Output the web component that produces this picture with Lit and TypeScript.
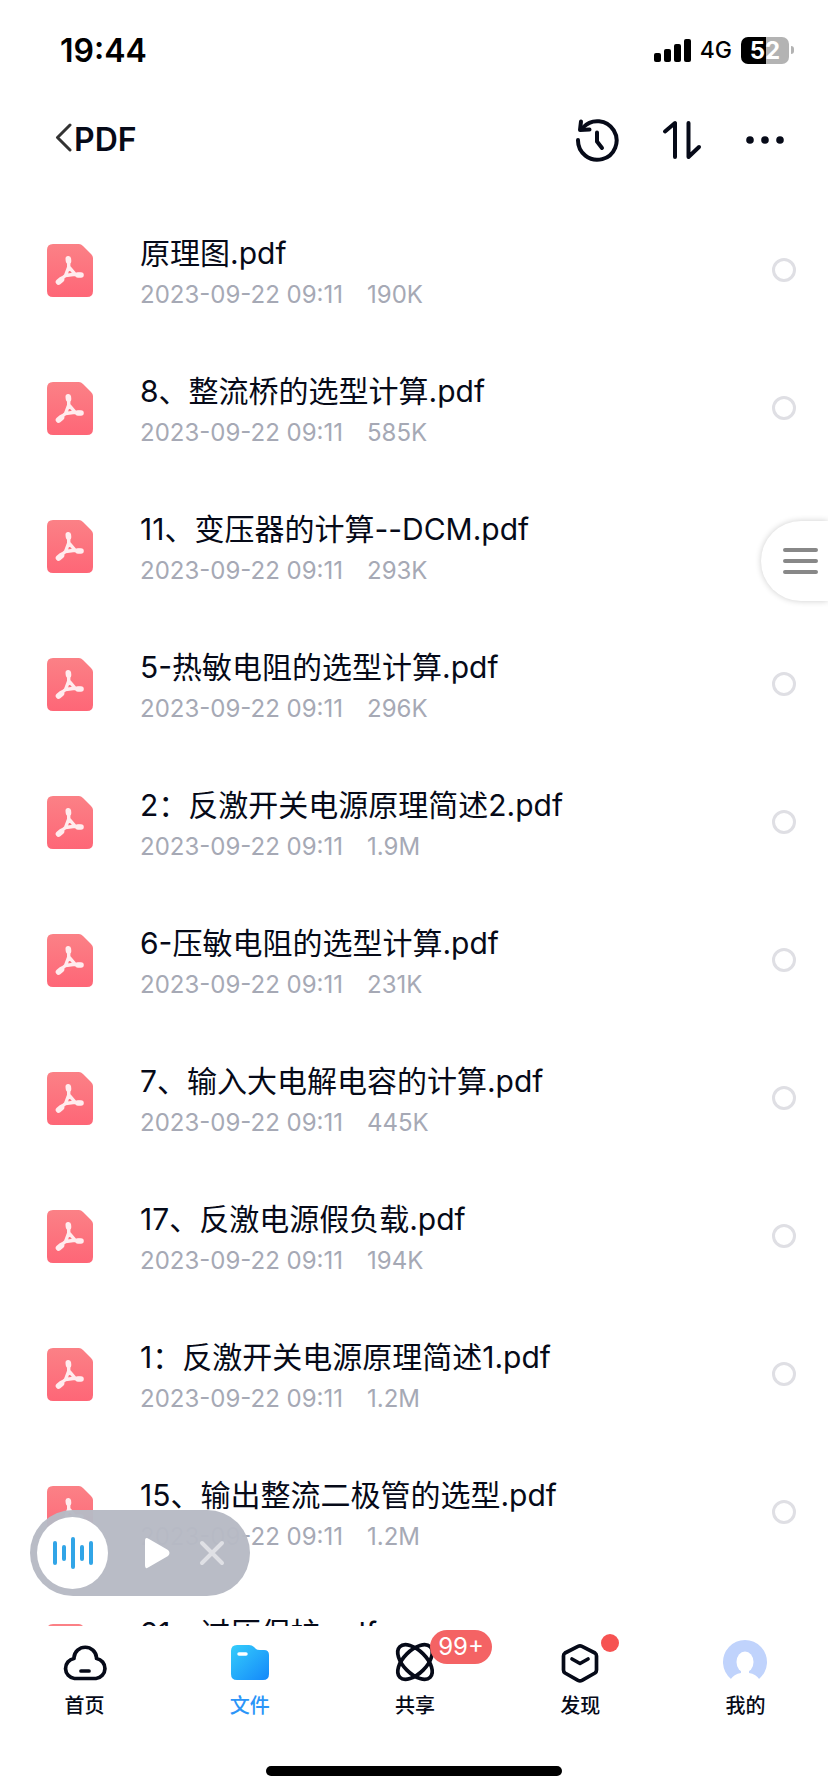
import { LitElement, html, css, svg } from "lit";
import { customElement, property } from "lit/decorators.js";

interface PdfFile {
  name: string;
  date: string;
  size: string;
}

const DATE = "2023-09-22 09:11";
const files: PdfFile[] = [
  { name: "原理图.pdf", date: DATE, size: "190K" },
  { name: "8、整流桥的选型计算.pdf", date: DATE, size: "585K" },
  { name: "11、变压器的计算--DCM.pdf", date: DATE, size: "293K" },
  { name: "5-热敏电阻的选型计算.pdf", date: DATE, size: "296K" },
  { name: "2：反激开关电源原理简述2.pdf", date: DATE, size: "1.9M" },
  { name: "6-压敏电阻的选型计算.pdf", date: DATE, size: "231K" },
  { name: "7、输入大电解电容的计算.pdf", date: DATE, size: "445K" },
  { name: "17、反激电源假负载.pdf", date: DATE, size: "194K" },
  { name: "1：反激开关电源原理简述1.pdf", date: DATE, size: "1.2M" },
  { name: "15、输出整流二极管的选型.pdf", date: DATE, size: "1.2M" },
  { name: "21、过压保护.pdf", date: DATE, size: "1.2M" },
];

@customElement("status-bar")
export class StatusBar extends LitElement {
  static styles = css`
    :host {
      display: flex;
      align-items: center;
      justify-content: space-between;
      height: 100px;
      padding: 0 34px 0 60px;
      box-sizing: border-box;
      color: #000;
    }
    .time {
      font-size: 32px;
      font-weight: 600;
    }
    .right {
      display: flex;
      align-items: center;
      gap: 9px;
    }
    .network {
      font-size: 23px;
      font-weight: 500;
    }
    .battery {
      display: flex;
      align-items: center;
      gap: 2px;
    }
    .level {
      width: 48px;
      height: 27px;
      border-radius: 7px;
      background: linear-gradient(90deg, #000 52%, #b3b3b3 52%);
      color: #fff;
      font-size: 24px;
      line-height: 27px;
      font-weight: 700;
      text-align: center;
    }
    .tip {
      width: 3px;
      height: 8px;
      border-radius: 0 4px 4px 0;
      background: #b3b3b3;
    }
  `;
  render() {
    return html`
      <span class="time">19:44</span>
      <span class="right">
        <svg width="37" height="24" viewBox="0 0 37 24" aria-hidden="true">
          <rect x="0" y="15" width="7" height="9" rx="2" />
          <rect x="10" y="11" width="7" height="13" rx="2" />
          <rect x="20" y="6" width="7" height="18" rx="2" />
          <rect x="30" y="1" width="7" height="23" rx="2" />
        </svg>
        <span class="network">4G</span>
        <span class="battery"><span class="level">52</span><span class="tip"></span></span>
      </span>
    `;
  }
}

@customElement("nav-header")
export class NavHeader extends LitElement {
  static styles = css`
    :host {
      display: flex;
      align-items: center;
      justify-content: space-between;
      height: 80px;
      padding: 0 40px 0 54px;
      color: #060a18;
    }
    button {
      display: flex;
      padding: 0;
      border: 0;
      background: none;
      color: inherit;
      font: inherit;
    }
    .title {
      display: flex;
      align-items: center;
      gap: 2px;
    }
    h1 {
      margin: 0;
      font-size: 32px;
      line-height: 40px;
      font-weight: 600;
    }
    .actions {
      display: flex;
      align-items: center;
      gap: 40px;
    }
    svg {
      display: block;
      fill: none;
      stroke: currentColor;
      stroke-width: 4;
      stroke-linecap: round;
      stroke-linejoin: round;
    }
    .back {
      stroke: #333;
      stroke-width: 3;
    }
    .dots {
      fill: currentColor;
      stroke: none;
    }
  `;
  render() {
    return html`
      <div class="title">
        <button aria-label="返回">
          <svg class="back" width="18" height="34" viewBox="0 0 18 34"><path d="M16 2 3.500 14.500 16 27" /></svg>
        </button>
        <h1>PDF</h1>
      </div>
      <div class="actions">
        <button aria-label="历史">
          <svg width="46" height="46" viewBox="0 0 46 46">
            <path d="M4 23A19.300 19.300 0 1 0 9 10.500" />
            <path d="M7 4.500 6 13 15.500 12.500" />
            <path d="M23 15.500V24.500L28 31" />
          </svg>
        </button>
        <button aria-label="排序">
          <svg width="42" height="42" viewBox="0 0 42 42">
            <path d="M5 12.500 15 4V38M28.500 4V38L39 28" />
          </svg>
        </button>
        <button aria-label="更多">
          <svg class="dots" width="46" height="10" viewBox="0 0 46 10">
            <circle cx="8" cy="5" r="3.800" /><circle cx="23" cy="5" r="3.800" /><circle cx="38" cy="5" r="3.800" />
          </svg>
        </button>
      </div>
    `;
  }
}

@customElement("file-row")
export class FileRow extends LitElement {
  @property({ attribute: false }) file!: PdfFile;

  static styles = css`
    :host {
      display: block;
    }
    .row {
      display: flex;
      align-items: center;
      height: 138px;
      padding: 0 32px 0 47px;
    }
    .icon {
      flex: none;
      margin-right: 47px;
    }
    .text {
      flex: 1;
      min-width: 0;
      padding-top: 6px;
    }
    .name {
      display: block;
      color: #060a18;
      font-size: 30px;
      line-height: 44px;
      white-space: nowrap;
    }
    .meta {
      display: flex;
      gap: 24px;
      color: #a6a9b5;
      font-size: 24px;
      line-height: 40px;
    }
    .pick {
      appearance: none;
      flex: none;
      width: 24px;
      height: 24px;
      margin: 0;
      border: 3px solid #dfdfe4;
      border-radius: 50%;
    }
  `;
  render() {
    const { name, date, size } = this.file;
    return html`
      <label class="row">
        <svg class="icon" width="46" height="53" viewBox="0 0 46 53" aria-hidden="true">
          <defs>
            <linearGradient id="sheet" x1="0" y1="0" x2="0" y2="1">
              <stop offset="0" stop-color="#fb8186" />
              <stop offset="1" stop-color="#fe6677" />
            </linearGradient>
          </defs>
          <path fill="url(#sheet)" d="M6 0H32Q34 0 36 2L44 10Q46 12 46 14V47Q46 53 40 53H6Q0 53 0 47V6Q0 0 6 0Z" />
          <g fill="none" stroke="#ffecee" stroke-linecap="round" stroke-linejoin="round">
            <path stroke-width="3.400" d="M21.700 18V23L18.500 31.500 28 30.200 22 23M18.500 31.500 13 36M28 30.200 33 30.500" />
            <path stroke-width="5.600" d="M21.300 14.800 21.500 17M11.500 38 14.500 35.500M31 31 34 31" />
          </g>
        </svg>
        <span class="text">
          <span class="name">${name}</span>
          <span class="meta"><span>${date}</span><span>${size}</span></span>
        </span>
        <input class="pick" type="checkbox" />
      </label>
    `;
  }
}

@customElement("audio-pill")
export class AudioPill extends LitElement {
  static styles = css`
    :host {
      display: flex;
      align-items: center;
      width: 220px;
      height: 86px;
      padding: 0 25px 0 7px;
      box-sizing: border-box;
      border-radius: 43px;
      background: rgba(183, 186, 196, 0.97);
    }
    button {
      display: flex;
      align-items: center;
      justify-content: center;
      padding: 0;
      border: 0;
      background: none;
    }
    .wave {
      width: 72px;
      height: 72px;
      margin-right: 35px;
      border-radius: 50%;
      background: #fff;
    }
    .play {
      margin-right: 28px;
    }
  `;
  render() {
    return html`
      <button class="wave" aria-label="正在播放">
        <svg width="42" height="34" viewBox="0 0 42 34" stroke="#31a5e7" stroke-width="4" stroke-linecap="round">
          <path d="M3 7V27M12 11V23M21 3V31M30 11V23M39 7V27" />
        </svg>
      </button>
      <button class="play" aria-label="播放">
        <svg width="28" height="32" viewBox="0 0 28 32" fill="#fff">
          <path d="M2 4Q2-1 6 2L25 13Q28 16 25 19L6 30Q2 33 2 28Z" />
        </svg>
      </button>
      <button aria-label="关闭">
        <svg width="26" height="26" viewBox="0 0 26 26" stroke="#dfe0e5" stroke-width="4" stroke-linecap="round">
          <path d="M3 3 23 23M23 3 3 23" />
        </svg>
      </button>
    `;
  }
}

const tabs = [
  {
    label: "首页",
    icon: svg`<path d="M12 17.500A11.300 11.300 0 0 1 34.500 17.500V18.500A10.100 10.100 0 0 1 34 38.500H12.500A10.100 10.100 0 0 1 12 18.500ZM19 31H27" stroke-width="3.700" />`,
  },
  {
    label: "文件",
    icon: svg`<defs><linearGradient id="folder" x1="0" y1="0" x2="1" y2="1"><stop offset="0" stop-color="#35cdfb"/><stop offset="1" stop-color="#1488fa"/></linearGradient></defs>
      <path stroke="none" fill="url(#folder)" d="M10 5H22Q25 5 27 7L29 9Q30 10 33 10H37Q42 10 42 15V34Q42 40 36 40H10Q4 40 4 34V11Q4 5 10 5Z" />
      <path stroke="#fff" stroke-width="3.500" d="M12 14H19" />`,
  },
  {
    label: "共享",
    icon: svg`<g stroke-width="3.700"><ellipse cx="23" cy="22" rx="21.500" ry="11.500" transform="rotate(45 23 22)" /><ellipse cx="23" cy="22" rx="21.500" ry="11.500" transform="rotate(-45 23 22)" /></g>`,
    badge: "99+",
  },
  {
    label: "发现",
    icon: svg`<path stroke-width="3.700" d="M21 6.300Q23 5.300 25 6.300L38 13Q39.500 14 39.500 16V30Q39.500 32 38 33L25 40.300Q23 41.300 21 40.300L8 33Q6.500 32 6.500 30V16Q6.500 14 8 13ZM15 19 23 23.500 31 19" />`,
    dot: true,
  },
  {
    label: "我的",
    icon: svg`<g stroke="none"><path fill="#c0d3fc" d="M9 39A22 22 0 1 1 37 39Z" /><ellipse cx="23" cy="22" rx="8.500" ry="10.500" fill="#fff" /><path fill="#fff" d="M19 30H27V33Q34 34 38 40H8Q12 34 19 33Z" /></g>`,
  },
];

@customElement("tab-bar")
export class TabBar extends LitElement {
  static styles = css`
    :host {
      display: block;
      background: #fff;
    }
    nav {
      display: grid;
      grid-template-columns: repeat(5, 1fr);
      height: 140px;
      padding: 14px 0 0 2px;
      box-sizing: border-box;
    }
    a {
      display: flex;
      flex-direction: column;
      align-items: center;
      gap: 8px;
      color: #060a18;
      text-decoration: none;
      font-size: 20px;
      line-height: 28px;
      font-weight: 500;
    }
    .active {
      color: #2b95f8;
    }
    .icon {
      position: relative;
      width: 46px;
      height: 44px;
    }
    svg {
      display: block;
      overflow: visible;
      fill: none;
      stroke: currentColor;
      stroke-width: 4;
      stroke-linecap: round;
      stroke-linejoin: round;
    }
    .badge {
      position: absolute;
      left: 38px;
      top: -10px;
      width: 62px;
      height: 34px;
      border-radius: 17px;
      background: #f46364;
      color: #fff;
      font-size: 24px;
      line-height: 34px;
      font-weight: 400;
      text-align: center;
    }
    .dot {
      position: absolute;
      left: 44px;
      top: -6px;
      width: 18px;
      height: 18px;
      border-radius: 50%;
      background: #f65352;
    }
    .home {
      width: 296px;
      height: 10px;
      margin: 0 auto 16px;
      border-radius: 5px;
      background: #000;
    }
  `;
  render() {
    return html`
      <nav>
        ${tabs.map(
          (t, i) => html`<a href="#" class=${i === 1 ? "active" : ""}>
            <span class="icon">
              <svg width="46" height="44" viewBox="0 0 46 44" aria-hidden="true">${t.icon}</svg>
              ${t.badge ? html`<span class="badge">${t.badge}</span>` : ""}
              ${t.dot ? html`<span class="dot"></span>` : ""}
            </span>
            <span>${t.label}</span>
          </a>`
        )}
      </nav>
      <div class="home"></div>
    `;
  }
}

@customElement("app-root")
export class AppRoot extends LitElement {
  static styles = css`
    :host {
      display: flex;
      flex-direction: column;
      position: relative;
      height: 100vh;
      overflow: hidden;
      background: #fff;
      font-family: Inter, "Noto Sans CJK SC", sans-serif;
    }
    .list {
      flex: 1;
      min-height: 0;
      margin: 0;
      padding: 21px 0 0;
      overflow: hidden;
      list-style: none;
    }
    .pill {
      position: absolute;
      left: 30px;
      bottom: 196px;
    }
    .drawer {
      position: absolute;
      right: 0;
      top: 521px;
      display: flex;
      align-items: center;
      width: 67px;
      height: 80px;
      padding: 0 0 0 22px;
      border: 0;
      border-radius: 40px 0 0 40px;
      background: #fff;
      box-shadow: 0 0 6px rgba(0, 0, 0, 0.2);
    }
  `;
  render() {
    return html`
      <status-bar></status-bar>
      <nav-header></nav-header>
      <ul class="list">
        ${files.map((f) => html`<li><file-row .file=${f}></file-row></li>`)}
      </ul>
      <tab-bar></tab-bar>
      <audio-pill class="pill"></audio-pill>
      <button class="drawer" aria-label="菜单">
        <svg width="35" height="28" viewBox="0 0 35 28" stroke="#888" stroke-width="4" stroke-linecap="round">
          <path d="M2 3H33M2 14H33M2 25H33" />
        </svg>
      </button>
    `;
  }
}
